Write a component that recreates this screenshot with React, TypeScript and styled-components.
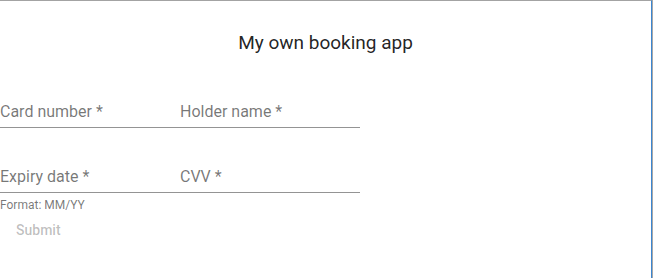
import React from 'react';
import styled, { createGlobalStyle } from 'styled-components';

const GlobalStyle = createGlobalStyle`
  html, body {
    margin: 0;
    padding: 0;
    background: #ffffff;
  }
  body {
    font-family: Roboto, 'Liberation Sans', sans-serif;
  }
`;

interface FieldProps {
  label: string;
  helper?: string;
}

const TextField: React.FC<FieldProps> = ({ label, helper }) => (
  <FieldWrap>
    <InputBox>
      <Label>{label} *</Label>
    </InputBox>
    {helper && <Helper>{helper}</Helper>}
  </FieldWrap>
);

const App: React.FC = () => {
  return (
    <>
      <GlobalStyle />
      <Frame>
        <Window>
          <Title>My own booking app</Title>
          <Form onSubmit={(e) => e.preventDefault()}>
            <Row>
              <TextField label="Card number" />
              <TextField label="Holder name" />
            </Row>
            <Row $gap={33}>
              <TextField label="Expiry date" helper="Format: MM/YY" />
              <TextField label="CVV" />
            </Row>
            <SubmitButton type="submit" disabled>
              Submit
            </SubmitButton>
          </Form>
        </Window>
      </Frame>
    </>
  );
};

export default App;

const Frame = styled.div`
  width: 653px;
  height: 278px;
  box-sizing: border-box;
  border-right: 1px solid #a8a8a8;
  overflow: hidden;
`;

const Window = styled.div`
  height: 100%;
  box-sizing: border-box;
  border-top: 1px solid #a3a3a3;
  border-right: 1px solid #3b86d1;
  padding-top: 30px;
`;

const Title = styled.h1`
  margin: 0;
  text-align: center;
  font-size: 19px;
  line-height: 23px;
  font-weight: 400;
  color: rgba(0, 0, 0, 0.87);
`;

const Form = styled.form`
  display: flex;
  flex-direction: column;
  align-items: flex-start;
  padding-top: 42px;
`;

const Row = styled.div<{ $gap?: number }>`
  display: flex;
  width: 360px;
  margin-top: ${(p) => p.$gap ?? 0}px;
`;

const FieldWrap = styled.div`
  display: flex;
  flex-direction: column;
  width: 180px;
`;

const InputBox = styled.div`
  padding: 6px 0;
  border-bottom: 1px solid rgba(0, 0, 0, 0.42);
`;

const Label = styled.label`
  display: block;
  height: 19px;
  font-size: 16px;
  line-height: 19px;
  color: rgba(0, 0, 0, 0.54);
  white-space: nowrap;
`;

const Helper = styled.p`
  margin: 2px 0 0;
  font-size: 12px;
  line-height: 20px;
  color: rgba(0, 0, 0, 0.54);
`;

const SubmitButton = styled.button`
  margin: 0;
  padding: 3px 16px;
  border: none;
  background: transparent;
  font-family: Roboto, 'Liberation Sans', sans-serif;
  font-size: 14px;
  font-weight: 500;
  line-height: 24.5px;
  color: rgba(0, 0, 0, 0.26);
  cursor: default;
`;
